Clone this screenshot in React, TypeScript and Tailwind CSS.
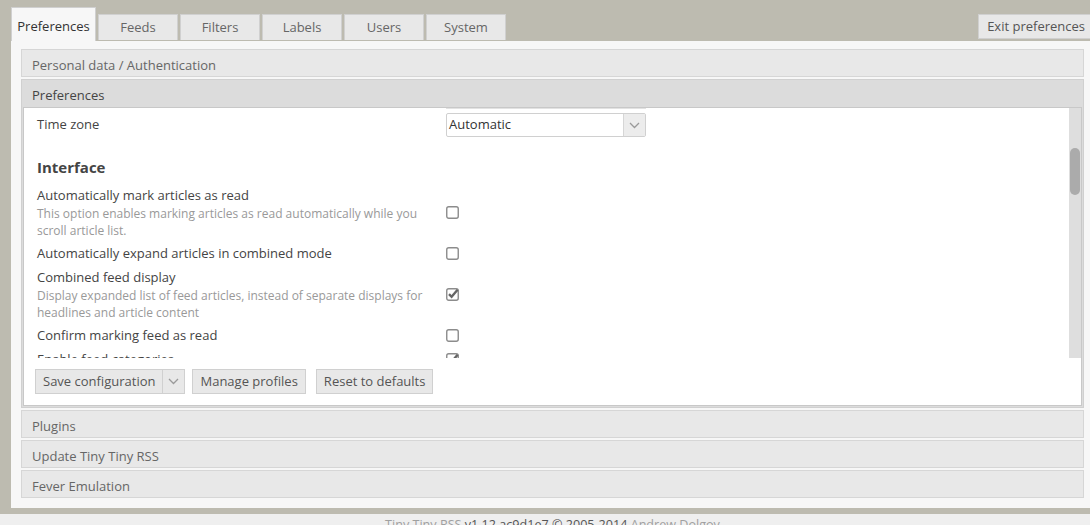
import React from 'react';

const tabs = ['Feeds', 'Filters', 'Labels', 'Users', 'System'];

const Chevron = () => (
    <svg width="11" height="7" viewBox="0 0 11 7">
        <path d="M1 1 L5.5 5.5 L10 1" fill="none" stroke="#9a9a9a" strokeWidth="1.3" />
    </svg>
);

const Check = ({ checked }: { checked?: boolean }) => (
    <svg width="15" height="15" viewBox="0 0 15 15">
        <rect x="0.75" y="1.75" width="11.5" height="11.5" rx="2" fill="#fff" stroke="#8c8c8c" strokeWidth="1.4" />
        {checked && <path d="M3 7.2 L5.6 9.8 L11.6 2.8" fill="none" stroke="#666" strokeWidth="2.4" />}
    </svg>
);

const Header = ({ title }: { title: string }) => (
    <div className="h-[28px] border border-[#d6d6d6] bg-[#e8e8e8] px-[10px] pt-[6px] text-[13px] leading-[18px] text-[#666]">
        {title}
    </div>
);

const PrefRow = ({ label, desc, checked }: { label: string; desc?: string; checked?: boolean }) => (
    <div className="flex items-center py-[2px]">
        <div className="w-[409px] shrink-0 pr-[12px]">
            <div className="text-[13px] leading-[20px] text-[#444]">{label}</div>
            {desc && <div className="text-[12px] leading-[17px] text-[#999]">{desc}</div>}
        </div>
        <Check checked={checked} />
    </div>
);

const Btn = ({ children, className = '' }: { children: React.ReactNode; className?: string }) => (
    <div className={`h-[25px] px-[7px] bg-[#e8e8e8] border border-[#d0d0d0] flex items-center text-[13px] text-[#555] ${className}`}>
        {children}
    </div>
);

export default function App() {
    return (
        <div className="w-[1090px] h-[525px] overflow-hidden bg-[#bdbbb0] font-['Open_Sans',sans-serif]">
            <div className="w-[1105px] px-[11px]">
                {/* tabs */}
                <div className="flex justify-between h-[41px]">
                    <div className="flex items-end gap-[2px]">
                        <div className="h-[34px] w-[85px] bg-[#f7f7f7] border border-[#d0d0d0] border-b-0 pt-[9px] text-center text-[13px] leading-[18px] text-[#333]">
                            Preferences
                        </div>
                        {tabs.map((t) => (
                            <div
                                key={t}
                                className="h-[26px] w-[80px] mb-[1px] bg-[#e8e8e8] border border-[#d0d0d0] border-b-0 flex items-center justify-center text-[13px] text-[#666]"
                            >
                                {t}
                            </div>
                        ))}
                    </div>
                    <div className="mt-[14px] h-[25px] px-[8px] bg-[#e8e8e8] border border-[#d0d0d0] flex items-center text-[13px] text-[#555]">
                        Exit preferences
                    </div>
                </div>

                {/* panel */}
                <div className="h-[467px] bg-[#f7f7f7] px-[10px] pt-[8px] pb-[10px]">
                    <div className="flex flex-col gap-[2px]">
                        <Header title="Personal data / Authentication" />
                        <div className="border border-[#d0d0d0] bg-[#dcdcdc]">
                            <div className="h-[27px] px-[10px] pt-[6px] text-[13px] leading-[18px] text-[#444]">Preferences</div>
                            <div className="mx-[1px] mb-[1px] h-[299px] border border-[#c8c8c8] bg-white flex flex-col">
                                <div className="h-[250px] flex">
                                    <div className="flex-1 overflow-hidden pl-[13px]">
                                        <div className="h-[2px] flex">
                                            <div className="w-[409px] shrink-0" />
                                            <div className="w-[200px] border-b border-[#e2e2e2] h-[1px]" />
                                        </div>
                                        <div className="flex items-center py-[3px]">
                                            <div className="w-[409px] shrink-0 text-[13px] text-[#444]">Time zone</div>
                                            <div className="w-[200px] h-[24px] border border-[#d0d0d0] rounded-[2px] flex">
                                                <div className="flex-1 px-[2px] flex items-center text-[13px] text-[#333]">Automatic</div>
                                                <div className="w-[22px] border-l border-[#d6d6d6] bg-[#ececec] flex items-center justify-center">
                                                    <Chevron />
                                                </div>
                                            </div>
                                        </div>
                                        <h2 className="mt-[17px] mb-[6px] text-[15px] leading-[20px] font-bold text-[#444]">Interface</h2>
                                        <PrefRow
                                            label="Automatically mark articles as read"
                                            desc="This option enables marking articles as read automatically while you scroll article list."
                                        />
                                        <PrefRow label="Automatically expand articles in combined mode" />
                                        <PrefRow
                                            label="Combined feed display"
                                            desc="Display expanded list of feed articles, instead of separate displays for headlines and article content"
                                            checked
                                        />
                                        <PrefRow label="Confirm marking feed as read" />
                                        <PrefRow label="Enable feed categories" checked />
                                        <PrefRow label="Enable shortcut keys" checked />
                                    </div>
                                    <div className="w-[12px] bg-[#dedede] pt-[40px] px-[1px]">
                                        <div className="h-[47px] rounded-full bg-[#ababab]" />
                                    </div>
                                </div>
                                <div className="flex pl-[11px] pt-[11px]">
                                    <div className="h-[25px] bg-[#e8e8e8] border border-[#d0d0d0] flex text-[13px] text-[#555]">
                                        <div className="px-[7px] flex items-center">Save configuration</div>
                                        <div className="w-[22px] border-l border-[#d0d0d0] flex items-center justify-center">
                                            <Chevron />
                                        </div>
                                    </div>
                                    <Btn className="ml-[7px]">Manage profiles</Btn>
                                    <Btn className="ml-[10px]">Reset to defaults</Btn>
                                </div>
                            </div>
                        </div>
                        <Header title="Plugins" />
                        <Header title="Update Tiny Tiny RSS" />
                        <Header title="Fever Emulation" />
                    </div>
                </div>
            </div>

            {/* footer */}
            <div className="mt-[6px] w-[1105px] bg-[#efefef] pt-[1px] text-center text-[12.6px] leading-[20px]">
                <span className="text-[#a0a0a0]">Tiny Tiny RSS</span>
                <span className="text-[#555]"> v1.12.ac9d1e7 © 2005-2014 </span>
                <span className="text-[#a0a0a0]">Andrew Dolgov</span>
            </div>
        </div>
    );
}
